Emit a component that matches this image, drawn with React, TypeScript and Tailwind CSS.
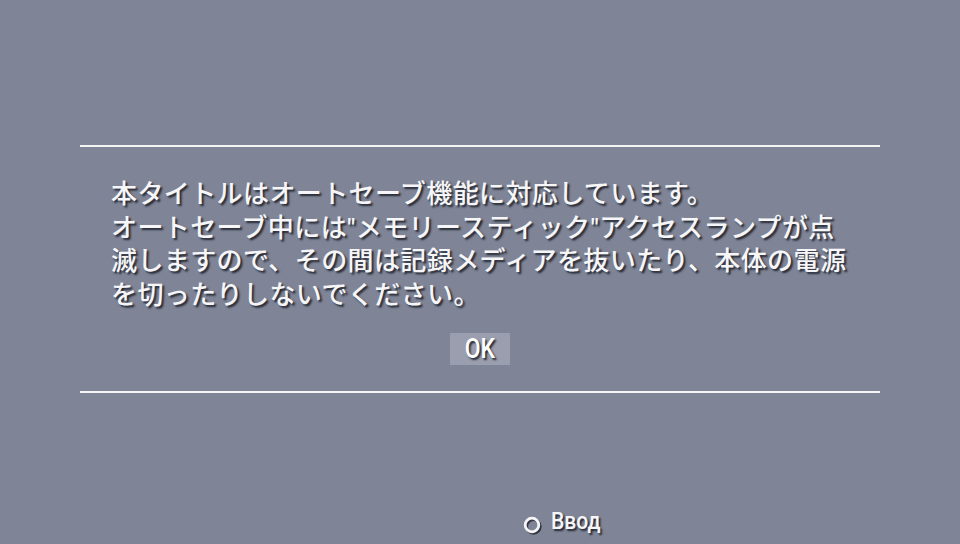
import React from "react";

const shadow = "[text-shadow:2px_2px_2px_rgba(20,22,30,0.85)]";

const Q = () => (
  <span style={{ fontFamily: 'Roboto, "Liberation Sans", sans-serif' }}>"</span>
);

export default function App() {
  const lines: React.ReactNode[] = [
    "本タイトルはオートセーブ機能に対応しています。",
    <>オートセーブ中には<Q />メモリースティック<Q />アクセスランプが点</>,
    "滅しますので、その間は記録メディアを抜いたり、本体の電源",
    "を切ったりしないでください。",
  ];
  return (
    <div className="w-[960px] h-[544px] bg-[#7f8597] flex flex-col items-center overflow-hidden relative" style={{ fontFamily: '"Noto Sans CJK JP", sans-serif' }}>
      <div className="mt-[145px] w-[800px] h-[2px] bg-[#f4f4f6]" />
      <div className="w-[800px] pl-[31px] pt-[28px] text-[26px] text-[#f6f6f8] tracking-[0.4px] font-medium">
        {lines.map((l, i) => (
          <div key={i} className={`whitespace-nowrap h-[33.5px] leading-[33.5px] ${shadow}`}>{l}</div>
        ))}
      </div>
      <div className="mt-[24px] w-[60px] h-[32px] bg-[#9a9eae] flex items-center justify-center">
        <span className={`text-[27px] leading-[32px] text-white font-medium scale-x-[0.85] ${shadow}`} style={{ fontFamily: 'Roboto, "Liberation Sans", sans-serif' }}>OK</span>
      </div>
      <div className="mt-[26px] w-[800px] h-[2px] bg-[#f4f4f6]" />
      <div className="absolute left-[523px] top-[506px] flex items-start">
        <svg width="22" height="22" viewBox="0 0 22 22" className="mt-[10px]">
          <circle cx="10.5" cy="10.5" r="6.8" fill="none" stroke="rgba(20,22,30,0.7)" strokeWidth="2.8" />
          <circle cx="9" cy="9" r="6.8" fill="none" stroke="#f6f6f8" strokeWidth="2.8" />
        </svg>
        <span className={`ml-[6px] mt-[1px] text-[24px] leading-[28px] text-[#f6f6f8] font-medium scale-x-[0.88] origin-left ${shadow}`} style={{ fontFamily: 'Roboto, "Liberation Sans", sans-serif' }}>Ввод</span>
      </div>
    </div>
  );
}
